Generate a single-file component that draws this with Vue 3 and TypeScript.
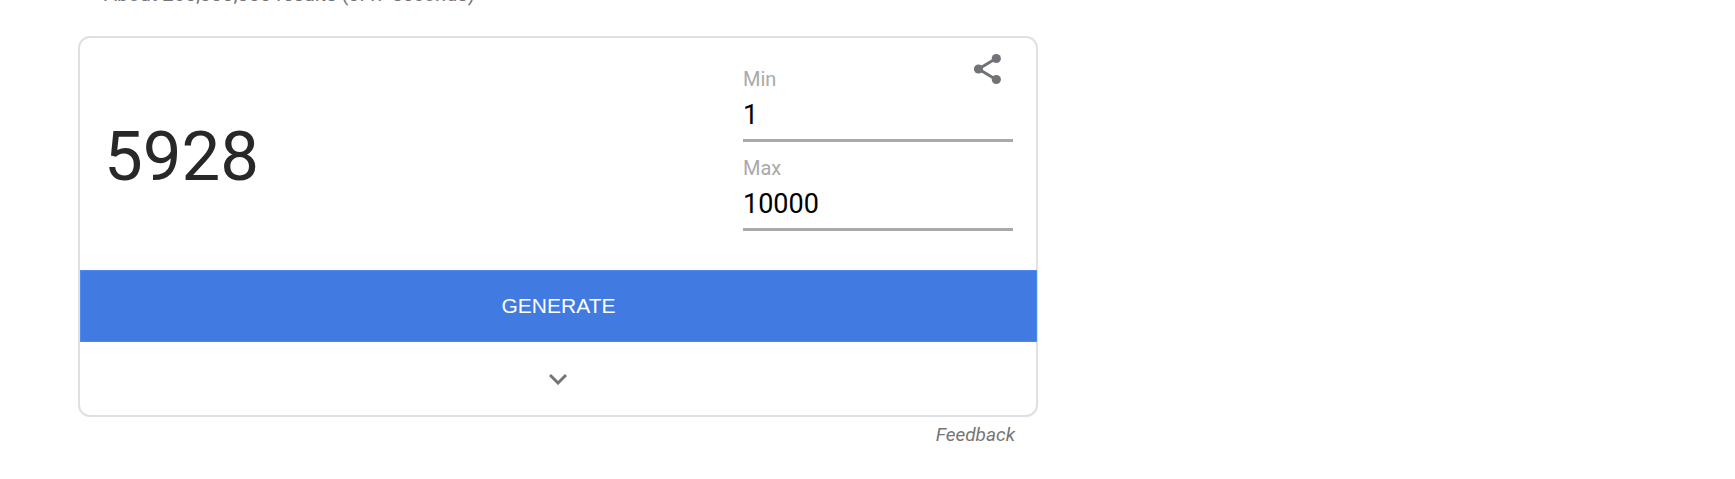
<script setup lang="ts">
import { ref } from 'vue'

const min = ref('1')
const max = ref('10000')
const result = ref(5928)
const expanded = ref(false)

function generate() {
  const low = Math.ceil(Number(min.value))
  const high = Math.floor(Number(max.value))
  if (high >= low) result.value = low + Math.floor(Math.random() * (high - low + 1))
}
</script>

<template>
  <main class="results">
    <p class="stats">About 265,000,000 results (0.47 seconds)</p>
    <section class="card">
      <div class="top">
        <output class="number">{{ result }}</output>
        <div class="fields">
          <label for="min">Min</label>
          <input id="min" v-model="min" type="text" inputmode="numeric" />
          <label for="max">Max</label>
          <input id="max" v-model="max" type="text" inputmode="numeric" />
        </div>
        <button class="share" type="button" aria-label="Share">
          <svg viewBox="0 0 36 36" width="36" height="36" fill="#717378">
            <path d="M9.5 18 27 7.5M9.5 18 27 28.5" fill="none" stroke="#717378" stroke-width="3" />
            <circle cx="9.5" cy="18" r="4.6" />
            <circle cx="27.3" cy="7.5" r="4.6" />
            <circle cx="27.3" cy="28.5" r="4.6" />
          </svg>
        </button>
      </div>
      <button class="generate" type="button" @click="generate">GENERATE</button>
      <button class="expand" type="button" aria-label="More" :aria-expanded="expanded" @click="expanded = !expanded">
        <svg viewBox="0 0 18 12" width="18" height="12">
          <path d="M1 2 9 10 17 2" fill="none" stroke="#757575" stroke-width="3" />
        </svg>
      </button>
    </section>
    <a class="feedback" href="#feedback">Feedback</a>
  </main>
</template>

<style>
body {
  margin: 0;
  background: #fff;
}
</style>

<style scoped>
.results {
  display: flex;
  flex-direction: column;
  max-width: 960px;
  margin-left: 78px;
  font-family: Roboto, "Liberation Sans", sans-serif;
}
.stats {
  margin: -17px 0 31px;
  padding-left: 26px;
  font-size: 20px;
  line-height: 22px;
  color: #757575;
}
.card {
  border: 2px solid #dfdfe6;
  border-radius: 12px;
}
.top {
  position: relative;
  display: flex;
  align-items: center;
  justify-content: space-between;
  padding: 28px 23px 39px 24px;
}
.number {
  padding-top: 16px;
  font-size: 69px;
  line-height: 80px;
  color: #282828;
}
.fields {
  width: 270px;
}
.fields label {
  display: block;
  font-size: 20px;
  line-height: 26px;
  color: #a9a9a9;
}
.fields input {
  display: block;
  box-sizing: border-box;
  width: 100%;
  height: 50px;
  margin: 0 0 13px;
  padding: 0 0 2px;
  border: 0;
  border-bottom: 3px solid #a9a9a9;
  background: none;
  font-family: inherit;
  font-size: 27px;
  color: #000;
  outline: 0;
}
.fields input:last-child {
  margin-bottom: 0;
}
.share {
  position: absolute;
  top: 13px;
  right: 31px;
  padding: 0;
  border: 0;
  background: none;
}
.share svg,
.expand svg {
  display: block;
}
.generate {
  display: block;
  width: calc(100% + 1px);
  height: 72px;
  padding: 0;
  border: 1px solid #4c8bf5;
  background: #417ae1;
  font-family: "Liberation Sans", Arial, sans-serif;
  font-size: 21px;
  color: #fff;
}
.expand {
  display: flex;
  align-items: center;
  justify-content: center;
  width: 100%;
  height: 73px;
  padding: 0;
  border: 0;
  background: none;
}
.feedback {
  align-self: flex-end;
  margin: 7px 23px 0 0;
  font-size: 19px;
  line-height: 22px;
  font-style: italic;
  color: #757575;
  text-decoration: none;
}
</style>
